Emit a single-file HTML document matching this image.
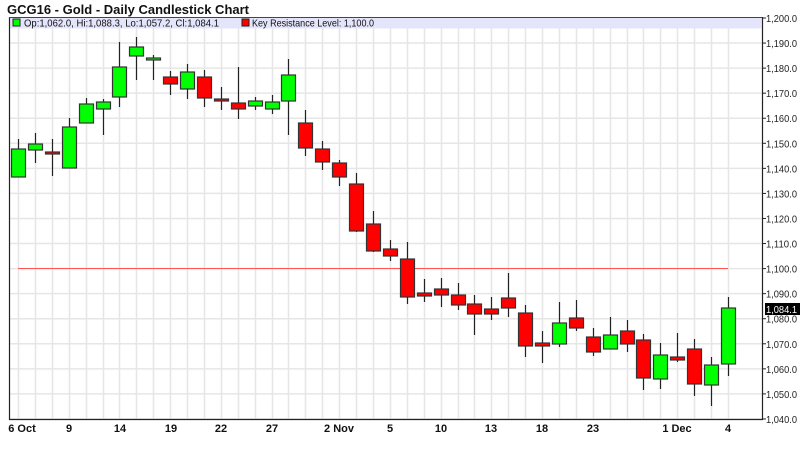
<!DOCTYPE html>
<html><head><meta charset="utf-8"><style>
body{margin:0;background:#fff;width:800px;height:454px;overflow:hidden}
svg{display:block;font-family:"Liberation Sans",Arial,sans-serif}
</style></head><body>
<svg id="s" width="800" height="454" xmlns="http://www.w3.org/2000/svg">
<text x="7" y="14" font-size="13" font-weight="bold" fill="#111">GCG16 - Gold - Daily Candlestick Chart</text>
<g id="grid"></g>
<rect x="9.5" y="17.5" width="752" height="11" fill="#e4e4fb"/>
<line x1="18" y1="268.5" x2="728" y2="268.5" stroke="#f55" stroke-width="1"/>
<g id="c"></g>
<path d="M9.5 17 V419.5 H762.5 V17" fill="none" stroke="#222" stroke-width="1.2"/>
<line x1="9" y1="17.5" x2="762" y2="17.5" stroke="#444" stroke-width="1"/>
<rect x="13" y="19" width="7" height="7" fill="#0f0" stroke="#222"/>
<text x="24" y="26.5" font-size="10.5" fill="#111" textLength="195" lengthAdjust="spacingAndGlyphs">Op:1,062.0, Hi:1,088.3, Lo:1,057.2, Cl:1,084.1</text>
<rect x="242" y="19" width="7" height="7" fill="#f00" stroke="#222"/>
<text x="252" y="26.5" font-size="10.5" fill="#111" textLength="122" lengthAdjust="spacingAndGlyphs">Key Resistance Level: 1,100.0</text>
<g id="yl" font-size="10.5" fill="#222"></g>
<rect x="765" y="303" width="35" height="12" fill="#000"/>
<text x="766" y="313" font-size="10.5" fill="#fff" textLength="31" lengthAdjust="spacingAndGlyphs">1,084.1</text>
<g font-size="11" font-weight="bold" fill="#111" text-anchor="middle">
<text x="22" y="432">6 Oct</text><text x="69" y="432">9</text><text x="120" y="432">14</text>
<text x="171" y="432">19</text><text x="221" y="432">22</text><text x="272" y="432">27</text>
<text x="339" y="432">2 Nov</text><text x="390" y="432">5</text><text x="441" y="432">10</text>
<text x="491" y="432">13</text><text x="542" y="432">18</text><text x="593" y="432">23</text>
<text x="677" y="432">1 Dec</text><text x="728" y="432">4</text>
</g>
</svg>
<script>
var ns="http://www.w3.org/2000/svg";
function el(p,t,a){var e=document.createElementNS(ns,t);for(var k in a)e.setAttribute(k,a[k]);p.appendChild(e);return e;}
var g=document.getElementById('grid'),c=document.getElementById('c'),yl=document.getElementById('yl');
for(var i=0;i<=42;i++){var x=Math.round(18+i*16.905)+0.5;el(g,'line',{x1:x,y1:18,x2:x,y2:419,stroke:'#e6e6e6','stroke-width':1.5});}
for(var k=0;k<=16;k++){var y=18+k*25.06;el(g,'line',{x1:10,y1:y,x2:762,y2:y,stroke:'#e6e6e6','stroke-width':1.5});
el(yl,'line',{x1:762,y1:y,x2:766,y2:y,stroke:'#222'});
var v=200-k*10;var t=el(yl,'text',{x:766,y:y+4,textLength:31,lengthAdjust:'spacingAndGlyphs'});t.textContent=v>=100?'1,'+v+'.0':'1,0'+v+'.0';}
var d=[["g",139,177,149,177],["g",133,163,144,150],["r",139,176,152,154],["g",118,168,127,168],["g",98,123,104,123],["g",99,135,102,109],["g",42,107,67,97],["g",37,80,47,56],["g",55,80,58,60],["r",71,95,77,84],["g",64,99,72,89],["r",70,107,77,98],["r",87,110,99,101],["r",67,119,103,109],["g",97,110,101,106],["g",95,114,102,109],["g",59,135,75,101],["r",110,156,123,148],["r",141,170,149,162],["r",160,186,163,177],["r",173,232,184,231],["r",211,252,224,251],["r",240,261,249,256],["r",242,304,259,297],["r",279,302,293,296],["r",278,307,289,295],["r",283,310,295,305],["r",295,335,304,314],["r",297,320,309,314],["r",273,317,298,308],["r",305,357,313,346],["r",331,363,343,346],["g",302,347,323,344],["r",300,331,318,328],["r",328,356,337,352],["g",317,349,335,349],["r",320,352,331,344],["r",334,390,340,378],["g",343,389,355,379],["r",333,362,357,360],["r",339,396,349,384],["g",357,406,365,385],["g",297,376,308,364]];
d.forEach(function(q,i){var x=Math.round(18+i*16.905)+0.5;
el(c,'line',{x1:x,y1:q[1],x2:x,y2:q[2],stroke:'#222','stroke-width':1.2});
el(c,'rect',{x:x-7,y:q[3],width:14,height:Math.max(2,q[4]-q[3]),fill:q[0]=='g'?'#00ff00':'#ff0000',stroke:'#333','stroke-width':1.2});});
</script>
</body></html>
